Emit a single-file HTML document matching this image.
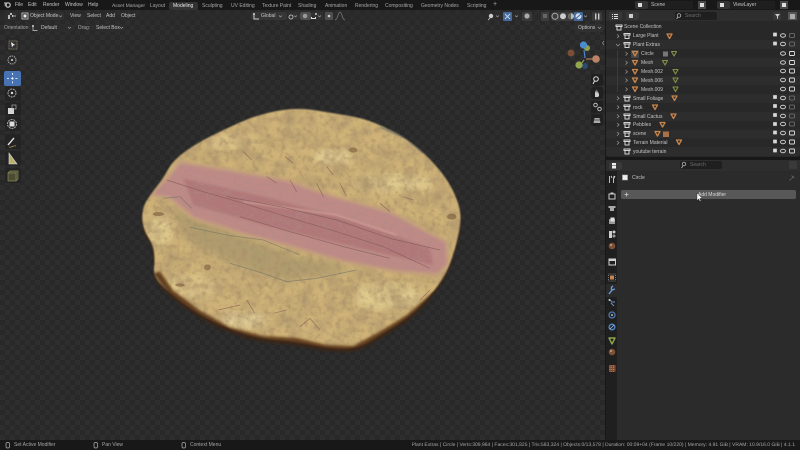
<!DOCTYPE html>
<html lang="en">
<head>
<meta charset="utf-8">
<title>Blender</title>
<style>
html,body{margin:0;padding:0;background:#181818;}
#a{position:relative;width:800px;height:450px;overflow:hidden;background:#181818;font-family:"Liberation Sans",sans-serif;font-size:5px;color:#c4c4c4;filter:blur(.32px);}
#a div,#a span.t{position:absolute;white-space:nowrap;}
.t{line-height:8px;height:8px;}
.b{color:#a6a6a6}
</style>
</head>
<body>
<div id="a">
<!-- viewport -->
<div style="left:0;top:10px;width:605px;height:430px;background-color:#282828;background-image:linear-gradient(45deg,#2e2e2e 25%,transparent 25%,transparent 75%,#2e2e2e 75%),linear-gradient(45deg,#2e2e2e 25%,transparent 25%,transparent 75%,#2e2e2e 75%);background-size:10px 10px;background-position:0 0,5px 5px;"></div>

<svg style="position:absolute;left:0;top:0" width="800" height="450" viewBox="0 0 800 450">
<defs>
<filter id="mott" x="0" y="0" width="100%" height="100%">
<feTurbulence type="fractalNoise" baseFrequency="0.022" numOctaves="4" seed="7"/>
<feColorMatrix values="0 0 0 0 0.46  0 0 0 0 0.33  0 0 0 0 0.16  2.4 0 0 0 -0.85"/>
</filter>
<filter id="fine" x="0" y="0" width="100%" height="100%">
<feTurbulence type="fractalNoise" baseFrequency="0.06" numOctaves="3" seed="3"/>
<feColorMatrix values="0 0 0 0 0.36  0 0 0 0 0.25  0 0 0 0 0.13  3 0 0 0 -1.4"/>
</filter>
<filter id="cell" x="0" y="0" width="100%" height="100%">
<feTurbulence type="turbulence" baseFrequency="0.03 0.055" numOctaves="2" seed="11"/>
<feColorMatrix values="0 0 0 0 0.42  0 0 0 0 0.26  0 0 0 0 0.26  -5 0 0 0 0.85"/>
</filter>
<filter id="bl3"><feGaussianBlur stdDeviation="4"/></filter>
<filter id="bl8"><feGaussianBlur stdDeviation="12"/></filter>
<filter id="bl1"><feGaussianBlur stdDeviation="2"/></filter>
<filter id="bl2"><feGaussianBlur stdDeviation="4"/></filter>
<filter id="bl0"><feGaussianBlur stdDeviation=".9"/></filter>
<path id="shape" d="M440 33 Q500 22 550 30 Q600 38 650 46 Q700 55 730 67 Q760 80 795 97 Q830 115 865 145 Q900 175 930 212 Q960 250 975 285 Q990 320 991 345 Q993 370 984 410 Q975 450 962 485 Q950 520 925 555 Q900 590 870 620 Q840 650 800 675 Q760 700 720 724 Q680 748 635 746 Q590 745 545 735 Q500 725 450 721 Q400 718 350 704 Q300 690 250 665 Q200 640 160 610 Q120 580 95 555 Q70 530 72 505 Q75 480 72 457 Q70 435 55 412 Q40 390 37 360 Q35 330 47 307 Q60 285 80 260 Q100 235 115 207 Q130 180 165 155 Q200 130 240 110 Q280 90 330 67 Q380 45 440 33Z"/>
<mask id="m" maskUnits="userSpaceOnUse" x="0" y="0" width="1020" height="780"><use href="#shape" fill="#fff" filter="url(#bl1)"/></mask>
<clipPath id="pinkclip"><path d="M60 285 L110 235 L150 185 L300 210 L470 240 L600 285 L780 335 L950 425 L955 490 L925 525 L800 515 L640 485 L500 445 L350 405 L190 355 L120 295Z"/></clipPath>
</defs>
<g transform="translate(130 100) scale(.33333)">
<!-- halo -->
<use href="#shape" fill="#3e2613" transform="translate(0 10)" filter="url(#bl2)" opacity=".9"/>
<g mask="url(#m)">
<rect width="1020" height="780" fill="#ceb277"/>
<!-- lighter patches -->
<ellipse cx="610" cy="170" rx="60" ry="22" fill="#e6d197" filter="url(#bl8)"/>
<ellipse cx="300" cy="125" rx="80" ry="20" fill="#dfc68a" filter="url(#bl8)"/>
<ellipse cx="790" cy="250" rx="120" ry="26" fill="#dfca8e" filter="url(#bl8)"/>
<ellipse cx="180" cy="560" rx="90" ry="36" fill="#dcc588" filter="url(#bl8)"/>
<ellipse cx="770" cy="590" rx="100" ry="40" fill="#dfca8d" filter="url(#bl8)"/>
<ellipse cx="90" cy="390" rx="45" ry="45" fill="#dec98c" filter="url(#bl8)"/>
<ellipse cx="340" cy="660" rx="70" ry="24" fill="#ead8a0" filter="url(#bl8)"/>
<!-- olive zone -->
<path d="M120 320 L300 395 L500 470 L680 510 L460 540 L300 490 L170 420Z" fill="#a3946b" opacity=".75" filter="url(#bl8)"/>
<rect width="1020" height="780" filter="url(#mott)" opacity=".85"/>
<rect width="1020" height="780" filter="url(#fine)" opacity=".5"/>
<!-- pink band -->
<g clip-path="url(#pinkclip)">
<rect width="1020" height="780" fill="#bd8a86"/>
<path d="M160 235 L400 290 L650 355 L900 445 L910 495 L650 435 L400 375 L190 315Z" fill="#b07878" filter="url(#bl3)"/>
<rect width="1020" height="780" filter="url(#cell)" opacity=".7"/>
</g>
<path d="M60 285 L110 235 L150 185 L300 210 L470 240 L600 285 L780 335 L950 425 L955 490 L925 525 L800 515 L640 485 L500 445 L350 405 L190 355 L120 295Z" fill="none" stroke="#c4a07c" stroke-width="12" filter="url(#bl3)" opacity=".85"/>
<path d="M340 305 L620 345 L800 405" stroke="#d6a49c" stroke-width="6" fill="none" filter="url(#bl1)" opacity=".6"/>
<!-- bottom dark edge -->
<path d="M70 520 L120 590 L200 650 L300 700 L400 728 L500 735 L590 755 L680 758 L760 712 L850 660 L930 570 L905 580 L830 645 L750 695 L670 738 L590 735 L500 714 L400 708 L300 682 L210 632 L130 572 L90 515Z" fill="#5a3518" opacity=".9" filter="url(#bl2)"/>
<!-- cracks -->
<g fill="none" stroke="#74504e" stroke-width="2.200" stroke-linejoin="round" opacity=".6" filter="url(#bl0)">
<path d="M110 240 L220 275 L340 310 L470 350 L620 395 L760 440 L900 505"/>
<path d="M290 290 L450 320 L620 360 L780 415 L930 450"/>
<path d="M330 350 L480 395 L640 440 L780 475"/>
<path d="M560 250 L580 290 M630 250 L650 290 M750 310 L780 335 M480 240 L500 275 M410 230 L440 250"/>
<path d="M340 155 L365 180 M465 170 L490 190 M590 200 L610 225 M820 290 L850 300"/>
<path d="M510 680 L540 655 L570 690 M430 640 L470 630 M870 600 L900 570 M265 630 L330 615 M350 600 L375 640"/>
</g>
<g fill="none" stroke="#6d7068" stroke-width="2.600" opacity=".6" filter="url(#bl0)">
<path d="M100 295 L150 290 L185 325"/>
<path d="M180 382 L290 405 L400 420 L510 465"/>
<path d="M300 490 L400 520 L470 545 L560 535 L680 510"/>
</g>
<g fill="#755636" opacity=".55" filter="url(#bl0)">
<ellipse cx="85" cy="342" rx="17" ry="6"/><ellipse cx="232" cy="502" rx="10" ry="9"/><ellipse cx="670" cy="150" rx="13" ry="8"/><ellipse cx="965" cy="350" rx="14" ry="9"/><ellipse cx="150" cy="555" rx="15" ry="5"/>
</g>
<path d="M750 82 L830 115 L880 160" stroke="#6c6f6e" stroke-width="6" fill="none" filter="url(#bl1)" opacity=".7"/>
</g>
</g>

<!-- top bars -->
<rect x="0" y="0" width="800" height="10" fill="#181818"/>
<rect x="0" y="10.500" width="605" height="11" fill="#2a2a2a" opacity=".5"/>
<rect x="5" y="12" width="11" height="8" rx="2" fill="#2f2f2f"/>
<rect x="20" y="12" width="44" height="8" rx="2" fill="#303030"/>
<rect x="251" y="12" width="36" height="8" rx="2" fill="#353535"/>
<rect x="288" y="12" width="12" height="8" rx="2" fill="#303030"/>
<rect x="300" y="12" width="11" height="8" rx="2" fill="#4e4e4e"/>
<rect x="311" y="12" width="12" height="8" fill="#303030"/>
<rect x="325" y="12" width="8" height="8" rx="1" fill="#4e4e4e"/>
<rect x="169" y="2" width="29" height="8" rx="2" fill="#333"/>
<rect x="31" y="24" width="42" height="8" rx="2" fill="#2c2c2c"/>
<rect x="94" y="24" width="30" height="8" rx="2" fill="#2c2c2c"/>
<rect x="575" y="24" width="28" height="8" rx="2" fill="#303030"/>
<!-- blender logo -->
<circle cx="8" cy="5" r="2.200" fill="none" stroke="#ccc" stroke-width="1.200"/>
<path d="M4 3 L8 3 M4.500 5 L7 5" stroke="#ccc" stroke-width=".9"/>
<!-- header icons -->
<path d="M8 15 h2 v4 h-2z M10 13 h2 v2 h-2z M12 15 h1.500 v2 h-1.500z" fill="#bbb"/>
<path d="M14 15.500 l1 1 1 -1" stroke="#bbb" fill="none" stroke-width=".6"/>
<rect x="22" y="13" width="6" height="6" fill="none" stroke="#ccc" stroke-width=".8"/><rect x="23.500" y="14.500" width="3" height="3" fill="#eee"/>
<path d="M59 15.500 l1.500 1.500 1.500 -1.500" stroke="#aaa" fill="none" stroke-width=".6"/>
<path d="M254 14 v5 h5" stroke="#ccc" fill="none"/><circle cx="254" cy="14" r=".9" fill="#fff"/>
<path d="M279 15.500 l1.500 1.500 1.500 -1.500 M294 15.500 l1.500 1.500 1.500 -1.500 M318 15.500 l1.500 1.500 1.500 -1.500" stroke="#aaa" fill="none" stroke-width=".6"/>
<circle cx="291" cy="17" r="2" fill="none" stroke="#ccc" stroke-width=".8"/>
<circle cx="305" cy="16" r="2.300" fill="#999"/>
<path d="M311 19 v-2 h1 v1 h3 v-1 h1 v2z" fill="#ddd"/><circle cx="316" cy="14" r=".9" fill="#fff"/>
<circle cx="329" cy="16" r="1.300" fill="#ccc"/>
<path d="M335 20 C338 20 338 12 340 12 C342 12 342 20 345 20" stroke="#777" fill="none" stroke-width=".8"/>
<!-- tool settings icon -->
<path d="M33 26 v4.500 h4.500" stroke="#ccc" fill="none" stroke-width=".7"/><circle cx="33" cy="26" r=".9" fill="#fff"/>
<path d="M68 27 l1.500 1.500 1.500 -1.500 M120 27 l1.500 1.500 1.500 -1.500 M598 27 l1.500 1.500 1.500 -1.500" stroke="#aaa" fill="none" stroke-width=".6"/>
<!-- right header -->
<circle cx="491" cy="16" r="2.200" fill="#ccc"/><path d="M490 18 l-2 2" stroke="#aaa"/>
<path d="M496 15.500 l1.500 1.500 1.500 -1.500 M515 15.500 l1.500 1.500 1.500 -1.500 M584 15.500 l1.500 1.500 1.500 -1.500" stroke="#aaa" fill="none" stroke-width=".6"/>
<rect x="503" y="12" width="9" height="9" rx="1" fill="#44699a"/><path d="M505 14 l5 5 M510 14 l-5 5" stroke="#c8d8ee" stroke-width=".9"/>
<rect x="522" y="12" width="10" height="9" rx="1" fill="#3a3a3a"/><circle cx="527" cy="16" r="2.600" fill="#aaa"/>
<rect x="541" y="12" width="8" height="9" rx="1" fill="#3c3c3c"/><rect x="543" y="14" width="4" height="4" fill="#666"/>
<rect x="551" y="12" width="32" height="9" rx="3" fill="#3c3c3c"/>
<circle cx="555" cy="16.300" r="3" fill="none" stroke="#aaa"/><circle cx="563" cy="16.300" r="3" fill="#ccc"/><circle cx="571" cy="16.300" r="3" fill="#bbb"/><path d="M571 13.300 a3 3 0 0 0 0 6z" fill="#666"/>
<rect x="574" y="12" width="9" height="9" rx="1" fill="#44699a"/><circle cx="578.500" cy="16.300" r="3" fill="#cfdcec"/><path d="M576 18.500 L581 14" stroke="#44699a"/>
<rect x="592" y="12" width="10" height="9" rx="1" fill="#3a3a3a"/><rect x="595" y="13.500" width="1.400" height="6" fill="#ccc"/><rect x="598" y="13.500" width="1.400" height="6" fill="#ccc"/>
<!-- left toolbar -->
<g>
<rect x="7" y="39" width="12" height="12" rx="2" fill="#333" stroke="#222"/>
<rect x="9" y="41" width="8" height="8" fill="none" stroke="#b8a070" stroke-width=".5" stroke-dasharray="1 .6"/>
<path d="M11 42 l4 3 -2 .5 -1 2z" fill="#eee"/>
<rect x="5" y="54" width="15" height="14" rx="2" fill="#2b2b2b" opacity=".7"/>
<circle cx="12" cy="60" r="4" fill="none" stroke="#aaa" stroke-dasharray="1.500 .8"/><circle cx="12" cy="60" r="1" fill="#ddd"/>
<rect x="4" y="71" width="17" height="15" rx="2" fill="#4772b3"/>
<path d="M12.500 73 v11 M7 78.500 h11" stroke="#d7e2f2" stroke-width="1" stroke-dasharray="2 2.200"/><circle cx="12.500" cy="78.500" r="1" fill="#fff"/>
<rect x="5" y="87" width="16" height="14" rx="2" fill="#222" opacity=".75"/>
<circle cx="12" cy="93" r="4" fill="none" stroke="#aaa" stroke-dasharray="2 .8"/><circle cx="12" cy="93" r="1.200" fill="#ddd"/>
<rect x="5" y="102" width="16" height="14" rx="2" fill="#222" opacity=".75"/>
<rect x="8" y="108" width="6" height="6" fill="#d5d5d5"/><rect x="12" y="105" width="4" height="4" fill="none" stroke="#aaa" stroke-width=".7"/>
<rect x="5" y="117" width="16" height="14" rx="2" fill="#222" opacity=".75"/>
<circle cx="12" cy="124" r="4.500" fill="none" stroke="#aaa" stroke-dasharray="2 .8"/><rect x="9.500" y="121.500" width="5" height="5" fill="#ddd"/>
<rect x="5" y="134" width="16" height="15" rx="2" fill="#222" opacity=".75"/>
<path d="M8 145 L14 138" stroke="#ddd" stroke-width="1.400"/><path d="M9 147 c3 1 4 -2 7 -1" stroke="#b49a55" stroke-width=".7" fill="none"/>
<rect x="5" y="151" width="16" height="15" rx="2" fill="#222" opacity=".75"/>
<path d="M9 153 v11 h8z" fill="#b9b070" stroke="#ddd" stroke-width=".6"/>
<rect x="5" y="168" width="16" height="15" rx="2" fill="#222" opacity=".75"/>
<path d="M8 173 h8 v8 h-8z M8 173 l2 -2 h8 v8 l-2 2" fill="#4c4c32" stroke="#88885a" stroke-width=".7"/>
</g>
<!-- gizmo -->
<g>
<circle cx="571" cy="53" r="3.500" fill="#7b4f35"/>
<path d="M586 59 L593 59" stroke="#b87d5a" stroke-width="1.200"/><path d="M584 60 L581 64" stroke="#8fa14b" stroke-width="1.200"/><path d="M585 58 L584 50" stroke="#4a86cc" stroke-width="1.200"/>
<circle cx="587" cy="48" r="3" fill="#8fa14b"/>
<circle cx="583.500" cy="45" r="3.600" fill="#4d8bd0"/>
<circle cx="585" cy="66" r="3" fill="#2f4a70"/>
<circle cx="579" cy="65" r="3.600" fill="#93a64e"/>
<circle cx="596" cy="59" r="3.800" fill="#bb8465"/>
<rect x="591" y="74" width="12" height="12" rx="2.500" fill="#202020"/>
<circle cx="596" cy="79" r="2.300" fill="none" stroke="#ddd"/><path d="M594.500 81 l-1.500 3" stroke="#ddd"/>
<rect x="591" y="87" width="12" height="12" rx="2.500" fill="#202020"/>
<path d="M595 97 v-4 l1 -3 v3 l1 -4 v4 l1 -3 v4 l1 -2 v4 l-1 1z" fill="#ccc"/>
<rect x="591" y="101" width="12" height="12" rx="2.500" fill="#202020"/>
<circle cx="595.500" cy="105" r="1.800" fill="none" stroke="#bbb"/><circle cx="599.500" cy="109" r="1.800" fill="none" stroke="#bbb"/>
<rect x="591" y="114" width="12" height="12" rx="2.500" fill="#202020"/>
<path d="M593.500 123 l1 -5 h5 l1 5z" fill="#aaa"/><path d="M593.500 120 h7" stroke="#333" stroke-width=".7"/>
</g>
<path d="M604 41 l-1.500 2 1.500 2" stroke="#999" fill="none" stroke-width=".7"/>

<!-- right panels -->
<rect x="605" y="0" width="195" height="450" fill="#181818"/>
<rect x="606" y="10" width="194" height="147" rx="3" fill="#282828"/>
<rect x="606" y="10" width="194" height="11" fill="#2e2e2e"/>
<rect x="606" y="160" width="194" height="280" rx="3" fill="#2a2a2a"/>
<rect x="606" y="160" width="194" height="11" fill="#2e2e2e"/>
<rect x="606" y="171" width="11" height="269" fill="#1f1f1f"/>
<rect x="617" y="172" width="183" height="268" fill="#2b2b2b"/>
<!-- scene/viewlayer -->
<rect x="635" y="1" width="13" height="8" rx="2" fill="#333"/>
<rect x="648" y="1" width="45" height="8" fill="#1f1f1f"/>
<rect x="698" y="1" width="8" height="8" fill="#484848"/><rect x="700" y="3" width="4" height="4" fill="#ddd"/>
<rect x="717" y="1" width="13" height="8" rx="2" fill="#333"/>
<rect x="730" y="1" width="45" height="8" fill="#1f1f1f"/>
<rect x="780" y="1" width="8" height="8" fill="#484848"/><rect x="782" y="3" width="4" height="4" fill="#ddd"/>
<path d="M638 3 h4 v4 h-4z" fill="#ddd"/><path d="M720 3 h4 v4 h-4z" fill="#ddd"/>
<!-- outliner header -->
<rect x="609" y="12" width="13" height="8" rx="2" fill="#383838"/>
<rect x="626" y="12" width="13" height="8" rx="2" fill="#383838"/>
<rect x="675" y="12" width="42" height="8" rx="2" fill="#1f1f1f"/>
<rect x="773" y="12" width="8" height="8" rx="1" fill="#383838"/>
<rect x="788" y="12" width="9" height="8" rx="1" fill="#555"/>
<path d="M612 14 h1 v1 h-1z M612 16 h1 v1 h-1z M612 18 h1 v1 h-1z M614 14 h4 v1 h-4z M614 16 h4 v1 h-4z M614 18 h4 v1 h-4z" fill="#ddd"/>
<rect x="629" y="14" width="4" height="4" fill="#ccc"/>
<circle cx="679" cy="15.500" r="1.800" fill="none" stroke="#ccc" stroke-width=".7"/><path d="M678 17 l-1.500 2" stroke="#ccc" stroke-width=".7"/>
<path d="M775 14 h5 l-2 2.500 v2.500 l-1 -.5 v-2z" fill="#ccc"/>
<rect x="790" y="14" width="5" height="5" fill="#aaa"/>
<!-- alternating rows -->
<g fill="#2d2d2d">
<rect x="606" y="40" width="194" height="9"/><rect x="606" y="58" width="194" height="9"/><rect x="606" y="76" width="194" height="9"/><rect x="606" y="94" width="194" height="9"/><rect x="606" y="112" width="194" height="9"/><rect x="606" y="129.500" width="194" height="9"/><rect x="606" y="147" width="194" height="9"/>
</g>
<rect x="617" y="50" width="1" height="42" fill="#3b3b3b"/>

<!-- collection icons -->
<g fill="none" stroke="#d5d5d5" stroke-width="1">
<path d="M616 25 h6 v1.500 h-6z M617 26.500 v3.500 h4 v-3.500"/>
<path d="M624 33.500 h6 v1.500 h-6z M625 35 v3.500 h4 v-3.500"/>
<path d="M624 42.500 h6 v1.500 h-6z M625 44 v3.500 h4 v-3.500"/>
<path d="M624 96 h6 v1.500 h-6z M625 97.500 v3.500 h4 v-3.500"/>
<path d="M624 105 h6 v1.500 h-6z M625 106.500 v3.500 h4 v-3.500"/>
<path d="M624 114 h6 v1.500 h-6z M625 115.500 v3.500 h4 v-3.500"/>
<path d="M624 122.500 h6 v1.500 h-6z M625 124 v3.500 h4 v-3.500"/>
<path d="M624 131.500 h6 v1.500 h-6z M625 133 v3.500 h4 v-3.500"/>
<path d="M624 140 h6 v1.500 h-6z M625 141.500 v3.500 h4 v-3.500"/>
<path d="M624 149 h6 v1.500 h-6z M625 150.500 v3.500 h4 v-3.500"/>
</g>
<!-- chevrons -->
<g fill="none" stroke="#999" stroke-width=".7">
<path d="M617 34.500 l2 1.800 -2 1.800 M616 44 l2 2 2 -2 M625.500 52 l2 1.800 -2 1.800 M625.500 61 l2 1.800 -2 1.800 M625.500 70 l2 1.800 -2 1.800 M625.500 78.500 l2 1.800 -2 1.800 M625.500 87.500 l2 1.800 -2 1.800 M617 96.500 l2 1.800 -2 1.800 M617 105.500 l2 1.800 -2 1.800 M617 114.500 l2 1.800 -2 1.800 M617 123 l2 1.800 -2 1.800 M617 132 l2 1.800 -2 1.800 M617 141 l2 1.800 -2 1.800"/>
</g>
<!-- object tri icons -->
<rect x="631" y="50" width="8" height="8" rx="1" fill="#474747"/>
<g fill="none" stroke="#c8854c" stroke-width="1.300" stroke-linejoin="round">
<path d="M667 34 h5 l-2.500 4.500z"/>
<path d="M632.500 51.500 h5 l-2.500 4.500z"/><path d="M632.500 60.500 h5 l-2.500 4.500z"/><path d="M632.500 69.500 h5 l-2.500 4.500z"/><path d="M632.500 78 h5 l-2.500 4.500z"/><path d="M632.500 87 h5 l-2.500 4.500z"/>
<path d="M672 96 h5 l-2.500 4.500z"/><path d="M652.500 105 h5 l-2.500 4.500z"/><path d="M671 114 h5 l-2.500 4.500z"/><path d="M660 122.500 h5 l-2.500 4.500z"/><path d="M655 131.500 h5 l-2.500 4.500z"/><path d="M676.500 140 h5 l-2.500 4.500z"/>
</g>
<g fill="none" stroke="#849248" stroke-width="1.100" stroke-linejoin="round">
<path d="M671.500 51.500 h5 l-2.500 4.500z"/><path d="M662.500 60.500 h5 l-2.500 4.500z"/><path d="M673 69.500 h5 l-2.500 4.500z"/><path d="M673 78 h5 l-2.500 4.500z"/><path d="M673 87 h5 l-2.500 4.500z"/>
</g>
<rect x="663" y="51.500" width="5" height="5" fill="#777"/>
<rect x="663" y="131.500" width="6" height="5.500" fill="#a87147"/>
<!-- right column icons -->
<g id="chk" fill="#d8d8d8" stroke="#3a3a3a" stroke-width=".3">
<rect x="773" y="41.500" width="4" height="4" rx=".5"/><rect x="773" y="32.500" width="4" height="4" rx=".5"/>
<rect x="773" y="95" width="4" height="4" rx=".5"/><rect x="773" y="104" width="4" height="4" rx=".5"/><rect x="773" y="113" width="4" height="4" rx=".5"/><rect x="773" y="122" width="4" height="4" rx=".5"/><rect x="773" y="130.500" width="4" height="4" rx=".5"/><rect x="773" y="139.500" width="4" height="4" rx=".5"/><rect x="773" y="148.500" width="4" height="4" rx=".5"/>
</g>
<g fill="none" stroke="#c9c9c9" stroke-width="1">
<ellipse cx="783" cy="35.500" rx="2.500" ry="1.700"/><ellipse cx="783" cy="44" rx="2.500" ry="1.700"/><ellipse cx="783" cy="53.500" rx="2.500" ry="1.700"/><ellipse cx="783" cy="62.500" rx="2.500" ry="1.700"/><ellipse cx="783" cy="71" rx="2.500" ry="1.700"/><ellipse cx="783" cy="80" rx="2.500" ry="1.700"/><ellipse cx="783" cy="89" rx="2.500" ry="1.700"/><ellipse cx="783" cy="98" rx="2.500" ry="1.700"/><ellipse cx="783" cy="107" rx="2.500" ry="1.700"/><ellipse cx="783" cy="116" rx="2.500" ry="1.700"/><ellipse cx="783" cy="124" rx="2.500" ry="1.700"/><ellipse cx="783" cy="133" rx="2.500" ry="1.700"/><ellipse cx="783" cy="142" rx="2.500" ry="1.700"/><ellipse cx="783" cy="151" rx="2.500" ry="1.700"/>
</g>
<g fill="none" stroke="#777" stroke-width=".8">
<rect x="789.500" y="33.500" width="5" height="4" rx="1"/><rect x="789.500" y="42" width="5" height="4" rx="1"/>
<rect x="789.500" y="96" width="5" height="4" rx="1"/><rect x="789.500" y="105" width="5" height="4" rx="1"/><rect x="789.500" y="114" width="5" height="4" rx="1"/><rect x="789.500" y="122" width="5" height="4" rx="1"/>
</g>
<g fill="none" stroke="#ddd" stroke-width=".9">
<rect x="789.500" y="51.500" width="5" height="4" rx=".7"/><rect x="789.500" y="60.500" width="5" height="4" rx=".7"/><rect x="789.500" y="69" width="5" height="4" rx=".7"/><rect x="789.500" y="78" width="5" height="4" rx=".7"/><rect x="789.500" y="87" width="5" height="4" rx=".7"/><rect x="789.500" y="131" width="5" height="4" rx=".7"/><rect x="789.500" y="140" width="5" height="4" rx=".7"/><rect x="789.500" y="149" width="5" height="4" rx=".7"/>
</g>
<!-- properties header -->
<rect x="609" y="162" width="13" height="8" rx="2" fill="#3a3a3a"/>
<path d="M612 163 h4 v2.500 h-4z M612 166 h4 v2.500 h-4z" fill="#eee"/>
<rect x="680" y="161" width="42" height="8" rx="2" fill="#1f1f1f"/>
<circle cx="684" cy="164" r="1.800" fill="none" stroke="#ccc" stroke-width=".7"/><path d="M683 166 l-1.500 2" stroke="#ccc" stroke-width=".7"/>
<rect x="789" y="161" width="8" height="8" rx="1" fill="#3a3a3a"/>
<!-- properties tabs -->
<g>
<path d="M609.500 176 v7 M611 176 l1 2 M614 176 l-.5 3 v4 M613.500 179 l1.500 -3" stroke="#cfcfcf" fill="none" stroke-width=".9"/>
<rect x="609" y="194" width="6" height="5" fill="none" stroke="#ccc"/><rect x="610.500" y="192.500" width="3" height="1.500" fill="#ccc"/>
<path d="M608.500 206 h7 v2 h-7z M610 208 h4 v3 h-4z" fill="#a8a8a8"/>
<rect x="609" y="219" width="6" height="5" fill="#999"/><rect x="610.500" y="217.500" width="4" height="4" fill="#ddd"/>
<path d="M609 231 h3 v7 h-3z" fill="#cfcfcf"/><circle cx="614" cy="232" r="1.500" fill="#ccc"/><circle cx="614" cy="236" r="1.500" fill="#999"/>
<circle cx="612" cy="246" r="3.300" fill="#7b5138"/><circle cx="611" cy="245" r="1" fill="#c9a27e"/>
<rect x="609" y="259" width="6.500" height="6" fill="none" stroke="#d0d0d0"/><rect x="608.500" y="259" width="7.500" height="2" fill="#d0d0d0"/>
<rect x="608.500" y="274" width="7" height="7" fill="none" stroke="#777" stroke-dasharray="1 1"/><rect x="610" y="275.500" width="4" height="4" fill="#c48a52"/>
<rect x="606" y="284" width="11" height="13" fill="#2b2b2b"/>
<path d="M609 294 l3 -4 M613 286 c-2 1 -2 3 -1 4 l3 -1" stroke="#6a9ed8" stroke-width="1.400" fill="none"/>
<path d="M609 299 l3 3 h3 M611 303 l3 3" stroke="#6f93c8" stroke-width=".9" fill="none"/><circle cx="609.500" cy="300" r="1" fill="#c9c9c9"/>
<circle cx="612" cy="315" r="3" fill="none" stroke="#4f78ad" stroke-width="1.300"/><circle cx="612" cy="315" r="1" fill="#bbb"/>
<circle cx="612" cy="327" r="2.800" fill="none" stroke="#4f86c8" stroke-width="1.500"/><path d="M610 329 l4 -4" stroke="#a8c4e6" stroke-width=".8"/>
<path d="M609 338 h6 l-3 6z" fill="none" stroke="#90a44d" stroke-width="1.400" stroke-linejoin="round"/>
<circle cx="612" cy="352" r="3.300" fill="#7b5138"/><circle cx="611" cy="351" r="1" fill="#c9a27e"/>
<rect x="609" y="365" width="6.500" height="7" fill="#7b4a30"/><path d="M609 367 h6.500 M609 369.500 h6.500 M611 365 v7 M613.500 365 v7" stroke="#c29a7c" stroke-width=".6" stroke-dasharray="1 1"/>
</g>
<!-- properties body -->
<rect x="622.500" y="175" width="5" height="5" fill="#eee" stroke="#bbb" stroke-width=".7" stroke-dasharray="1 .6"/>
<path d="M793.500 176 l-2 3 m0 -3.500 l3 2.500 m-3.500 1 l-1.500 1.500" stroke="#666" fill="none" stroke-width=".8"/>
<rect x="621" y="190" width="175" height="9" rx="2" fill="#585858"/>
<path d="M624.500 194.500 h4 M626.500 192.500 v4" stroke="#ccc" stroke-width=".8"/>
<!-- cursor -->
<path d="M697 193 v7.500 l1.800 -1.600 1.100 2.500 1 -.5 -1.100 -2.400 2.300 -.2z" fill="#fff" stroke="#222" stroke-width=".4"/>
<!-- status bar -->
<rect x="0" y="440" width="800" height="10" fill="#181818"/>
<g fill="none" stroke="#b0b0b0" stroke-width=".7">
<rect x="6" y="442.500" width="3.500" height="5.500" rx="1.500"/><rect x="94" y="442.500" width="3.500" height="5.500" rx="1.500"/><rect x="182" y="442.500" width="3.500" height="5.500" rx="1.500"/>
</g>
</svg>

<!-- TEXT -->
<span class="t" style="position:absolute;left:15px;top:1px">File</span>
<span class="t" style="position:absolute;left:28px;top:1px">Edit</span>
<span class="t" style="position:absolute;left:43px;top:1px">Render</span>
<span class="t" style="position:absolute;left:65px;top:1px">Window</span>
<span class="t" style="position:absolute;left:88px;top:1px">Help</span>
<span class="t b" style="position:absolute;left:112px;top:2px;font-size:5px;text-rendering:geometricPrecision;letter-spacing:-.05px">Asset Manager</span>
<span class="t b" style="position:absolute;left:150px;top:2px">Layout</span>
<span class="t" style="position:absolute;left:173px;top:2px;color:#e8e8e8">Modeling</span>
<span class="t b" style="position:absolute;left:202px;top:2px">Sculpting</span>
<span class="t b" style="position:absolute;left:231px;top:2px">UV Editing</span>
<span class="t b" style="position:absolute;left:262px;top:2px">Texture Paint</span>
<span class="t b" style="position:absolute;left:298px;top:2px">Shading</span>
<span class="t b" style="position:absolute;left:325px;top:2px">Animation</span>
<span class="t b" style="position:absolute;left:355px;top:2px">Rendering</span>
<span class="t b" style="position:absolute;left:385px;top:2px">Compositing</span>
<span class="t b" style="position:absolute;left:421px;top:2px">Geometry Nodes</span>
<span class="t b" style="position:absolute;left:467px;top:2px">Scripting</span>
<span class="t b" style="position:absolute;left:493px;top:1px;font-size:7px">+</span>

<span class="t" style="position:absolute;left:30px;top:12px">Object Mode</span>
<span class="t" style="position:absolute;left:70px;top:12px">View</span>
<span class="t" style="position:absolute;left:87px;top:12px">Select</span>
<span class="t" style="position:absolute;left:106px;top:12px">Add</span>
<span class="t" style="position:absolute;left:121px;top:12px">Object</span>
<span class="t" style="position:absolute;left:261px;top:12px">Global</span>
<span class="t b" style="position:absolute;left:4px;top:24px">Orientation:</span>
<span class="t" style="position:absolute;left:41px;top:24px">Default</span>
<span class="t b" style="position:absolute;left:78px;top:24px">Drag:</span>
<span class="t" style="position:absolute;left:96px;top:24px">Select Box</span>
<span class="t" style="position:absolute;left:578px;top:24px">Options</span>

<span class="t" style="position:absolute;left:651px;top:1px">Scene</span>
<span class="t" style="position:absolute;left:733px;top:1px">ViewLayer</span>
<span class="t" style="position:absolute;left:685px;top:12px;color:#6d6d6d">Search</span>
<span class="t" style="position:absolute;left:690px;top:161px;color:#6d6d6d">Search</span>

<span class="t" style="position:absolute;left:624px;top:23px">Scene Collection</span>
<span class="t" style="position:absolute;left:633px;top:32px">Large Plant</span>
<span class="t" style="position:absolute;left:633px;top:41px">Plant Extras</span>
<span class="t" style="position:absolute;left:641px;top:50px">Circle</span>
<span class="t" style="position:absolute;left:641px;top:59px">Mesh</span>
<span class="t" style="position:absolute;left:641px;top:68px">Mesh.002</span>
<span class="t" style="position:absolute;left:641px;top:76.500px">Mesh.006</span>
<span class="t" style="position:absolute;left:641px;top:85.500px">Mesh.009</span>
<span class="t" style="position:absolute;left:633px;top:94.500px">Small Foliage</span>
<span class="t" style="position:absolute;left:633px;top:103.500px">rock</span>
<span class="t" style="position:absolute;left:633px;top:112.500px">Small Cactus</span>
<span class="t" style="position:absolute;left:633px;top:121px">Pebbles</span>
<span class="t" style="position:absolute;left:633px;top:130px">scene</span>
<span class="t" style="position:absolute;left:633px;top:138.500px">Terrain Material</span>
<span class="t" style="position:absolute;left:633px;top:147.500px">youtube terrain</span>

<span class="t" style="position:absolute;left:632px;top:174px">Circle</span>
<span class="t" style="position:absolute;left:698px;top:190.500px;color:#d8d8d8">Add Modifier</span>

<span class="t b" style="position:absolute;left:14px;top:441px">Set Active Modifier</span>
<span class="t b" style="position:absolute;left:102px;top:441px">Pan View</span>
<span class="t b" style="position:absolute;left:190px;top:441px">Context Menu</span>
<span class="t b" style="position:absolute;right:5px;top:441px;font-size:5px;text-rendering:geometricPrecision">Plant Extras | Circle | Verts:309,964 | Faces:301,825 | Tris:583,324 | Objects:0/13,578 | Duration: 00:09+04 (Frame 10/220) | Memory: 4.91 GiB | VRAM: 10.9/16.0 GiB | 4.1.1</span>
</div>
</body>
</html>
